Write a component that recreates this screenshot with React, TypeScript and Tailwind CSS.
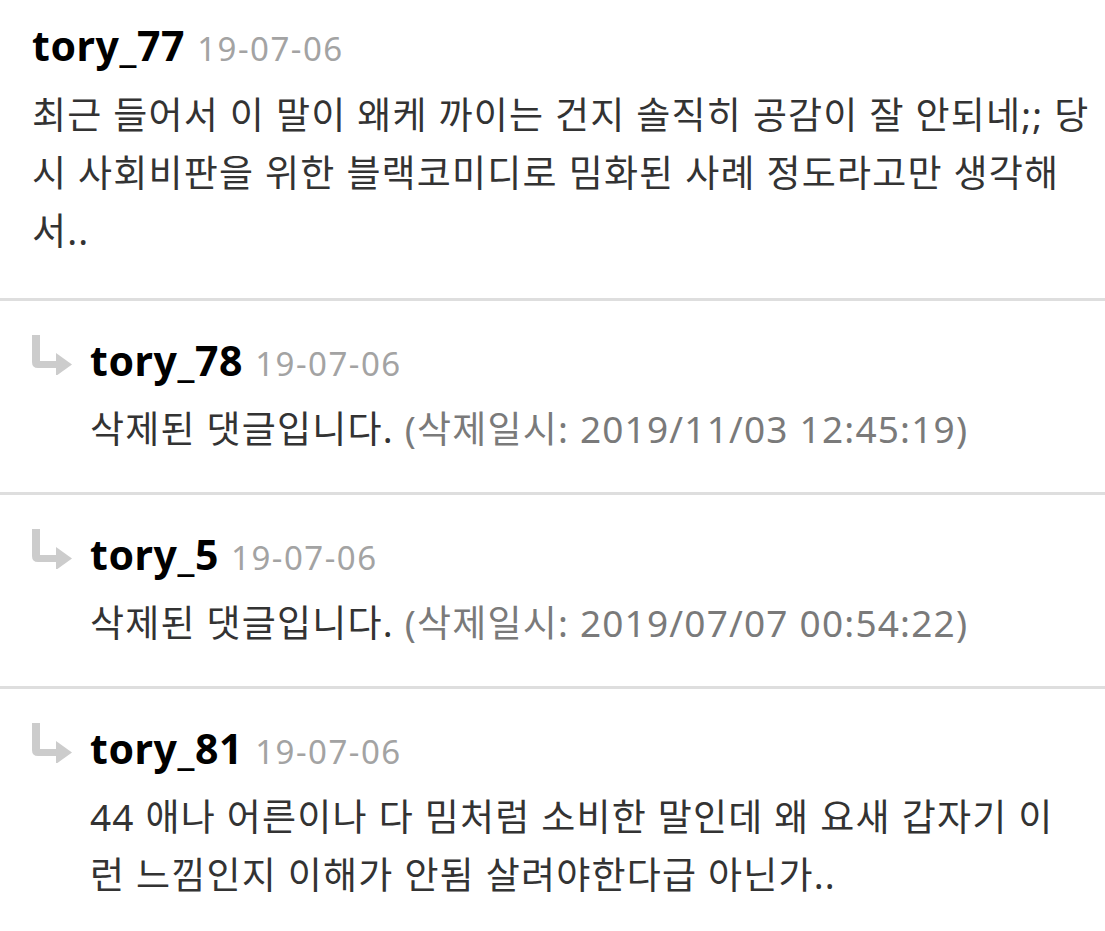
const font = "font-['Noto_Sans','Noto_Sans_CJK_KR',sans-serif]";

function ReplyArrow() {
  return (
    <svg width="40" height="40" viewBox="0 0 40 40" className="shrink-0">
      <path d="M0 0 H8 V26 H27 V33 H6 Q0 33 0 27 Z" fill="#cccccc" />
      <path d="M24 18 L40 29.5 L24 41 Z" fill="#cccccc" />
    </svg>
  );
}

function Header({ name, date }: { name: string; date: string }) {
  return (
    <div className="leading-[50px] whitespace-nowrap">
      <span className="text-[41px] font-bold tracking-[0.6px] text-black">{name}</span>
      <span className="ml-[12px] text-[33px] tracking-[1.5px] text-[#a3a3a3]">{date}</span>
    </div>
  );
}

function Divider() {
  return <div className="h-[3px] bg-[#dedede]" />;
}

function Reply({ name, date, children }: { name: string; date: string; children: React.ReactNode }) {
  return (
    <div className="flex pl-[32px] pr-[24px] pt-[34px] pb-[34px]">
      <div className="w-[58px] shrink-0">
        <ReplyArrow />
      </div>
      <div className="min-w-0 flex-1">
        <Header name={name} date={date} />
        <div className="mt-[5px] text-[37px] leading-[58px] tracking-[1.2px] text-[#333333]">{children}</div>
      </div>
    </div>
  );
}

export default function App() {
  return (
    <div className={`${font} w-[1105px] h-[931px] overflow-hidden bg-white`}>
      <div className="pl-[32px] pr-[12px] pt-[20px] pb-[38px]">
        <Header name="tory_77" date="19-07-06" />
        <p className="mt-[6px] text-[37px] leading-[58px] tracking-[1.2px] text-[#333333]">
          최근 들어서 이 말이 왜케 까이는 건지 솔직히 공감이 잘 안되네;; 당시 사회비판을 위한 블랙코미디로 밈화된 사례 정도라고만 생각해서..
        </p>
      </div>
      <Divider />
      <Reply name="tory_78" date="19-07-06">
        삭제된 댓글입니다. <span className="text-[#7a7a7a]">(삭제일시: 2019/11/03 12:45:19)</span>
      </Reply>
      <Divider />
      <Reply name="tory_5" date="19-07-06">
        삭제된 댓글입니다. <span className="text-[#7a7a7a]">(삭제일시: 2019/07/07 00:54:22)</span>
      </Reply>
      <Divider />
      <Reply name="tory_81" date="19-07-06">
        44 애나 어른이나 다 밈처럼 소비한 말인데 왜 요새 갑자기 이런 느낌인지 이해가 안됨 살려야한다급 아닌가..
      </Reply>
    </div>
  );
}
